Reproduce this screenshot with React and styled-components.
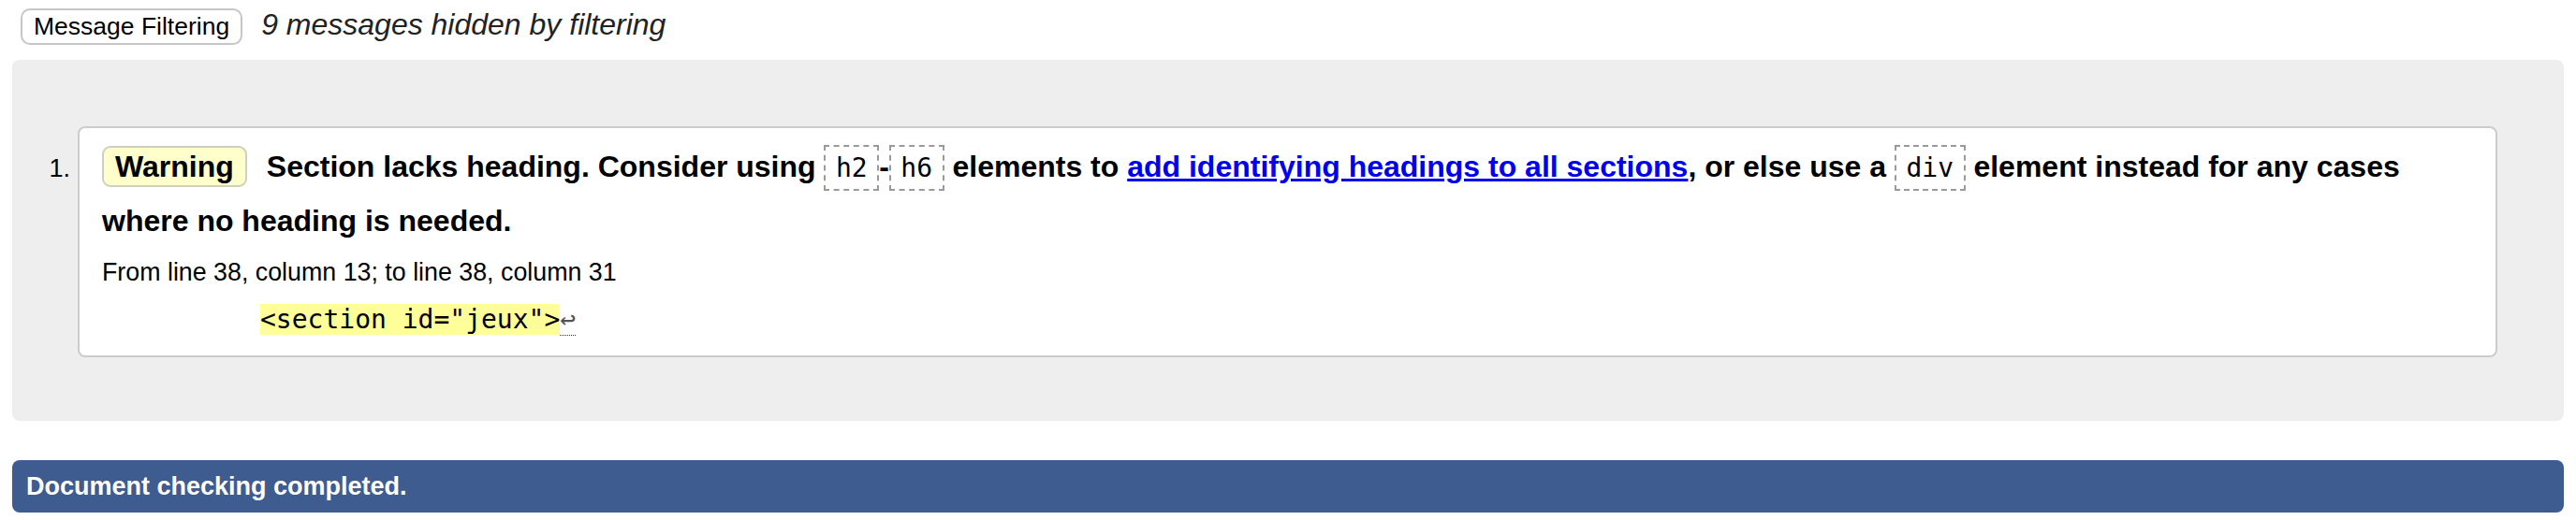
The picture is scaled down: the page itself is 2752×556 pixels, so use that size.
import React from "react";
import styled, { createGlobalStyle } from "styled-components";

const GlobalStyle = createGlobalStyle`
  html, body {
    margin: 0;
    padding: 0;
    background: #ffffff;
  }
  body {
    font-family: "Liberation Sans", Arial, Helvetica, sans-serif;
    color: #000;
  }
`;

const Page = styled.div`
  width: 100%;
`;

const TopBar = styled.div`
  display: flex;
  align-items: baseline;
  gap: 20px;
  padding: 8px 0 0 22px;
`;

const FilterButton = styled.button`
  font-family: "Liberation Sans", Arial, Helvetica, sans-serif;
  font-size: 26.5px;
  line-height: normal;
  color: #000;
  background: #fff;
  border: 2px solid #c6c6c6;
  border-radius: 10px;
  padding: 2px 12px;
  margin: 0;
  cursor: pointer;
`;

const HiddenNote = styled.span`
  font-size: 32px;
  font-style: italic;
  color: #222;
`;

const Panel = styled.section`
  margin: 16px 13px 0;
  background: #eeeeee;
  border-radius: 8px;
  padding: 71px 71px 68px 0;
`;

const MessageList = styled.ol`
  list-style: none;
  margin: 0;
  padding: 0;
`;

const MessageItem = styled.li`
  display: flex;
  align-items: baseline;
`;

const Marker = styled.span`
  flex: 0 0 70px;
  box-sizing: border-box;
  text-align: right;
  padding-right: 8px;
  font-size: 27px;
`;

const Card = styled.div`
  flex: 1;
  min-width: 0;
  background: #fff;
  border: 2px solid #cccccc;
  border-radius: 8px;
  padding: 12px 24px 22px 24px;
`;

const MessageText = styled.p`
  margin: 0;
  font-size: 32px;
  font-weight: bold;
  line-height: 58px;
`;

const Badge = styled.strong`
  background: #ffffcc;
  border: 2px solid #cfcfc0;
  border-radius: 9px;
  padding: 2px 12px;
  margin-right: 21px;
`;

const InlineCode = styled.code`
  font-family: "DejaVu Sans Mono", "Liberation Mono", monospace;
  font-size: 28px;
  font-weight: normal;
  line-height: normal;
  border: 2px dashed #9a9a9a;
  padding: 6px 10.5px;
`;

const DocLink = styled.a`
  color: #0000ee;
  text-decoration: underline;
`;

const LocationText = styled.p`
  margin: 11px 0 0;
  font-size: 26.8px;
  line-height: normal;
`;

const Extract = styled.p`
  margin: 18px 0 0;
  padding-left: 169px;
  font-family: "DejaVu Sans Mono", "Liberation Mono", monospace;
  font-size: 28px;
  line-height: normal;
`;

const Highlight = styled.mark`
  background: #ffff99;
  color: #000;
`;

const LineBreak = styled.span`
  color: #555;
  border-bottom: 1px dotted #333;
`;

const StatusBar = styled.div`
  margin: 42px 13px 0;
  background: #3e5c8f;
  border-radius: 8px;
  padding: 12px 15px;
  line-height: 32px;
  color: #fff;
  font-size: 27px;
  font-weight: bold;
`;

export default function App() {
  return (
    <Page>
      <GlobalStyle />
      <TopBar>
        <FilterButton type="button">Message Filtering</FilterButton>
        <HiddenNote>9 messages hidden by filtering</HiddenNote>
      </TopBar>
      <Panel>
        <MessageList>
          <MessageItem>
            <Marker>1.</Marker>
            <Card>
              <MessageText>
                <Badge>Warning</Badge>
                Section lacks heading. Consider using <InlineCode>h2</InlineCode>-
                <InlineCode>h6</InlineCode> elements to{" "}
                <DocLink href="#">add identifying headings to all sections</DocLink>, or else use a{" "}
                <InlineCode>div</InlineCode> element instead for any cases where no heading is needed.
              </MessageText>
              <LocationText>From line 38, column 13; to line 38, column 31</LocationText>
              <Extract>
                <Highlight>&lt;section id="jeux"&gt;</Highlight>
                <LineBreak>↩</LineBreak>
              </Extract>
            </Card>
          </MessageItem>
        </MessageList>
      </Panel>
      <StatusBar>Document checking completed.</StatusBar>
    </Page>
  );
}
